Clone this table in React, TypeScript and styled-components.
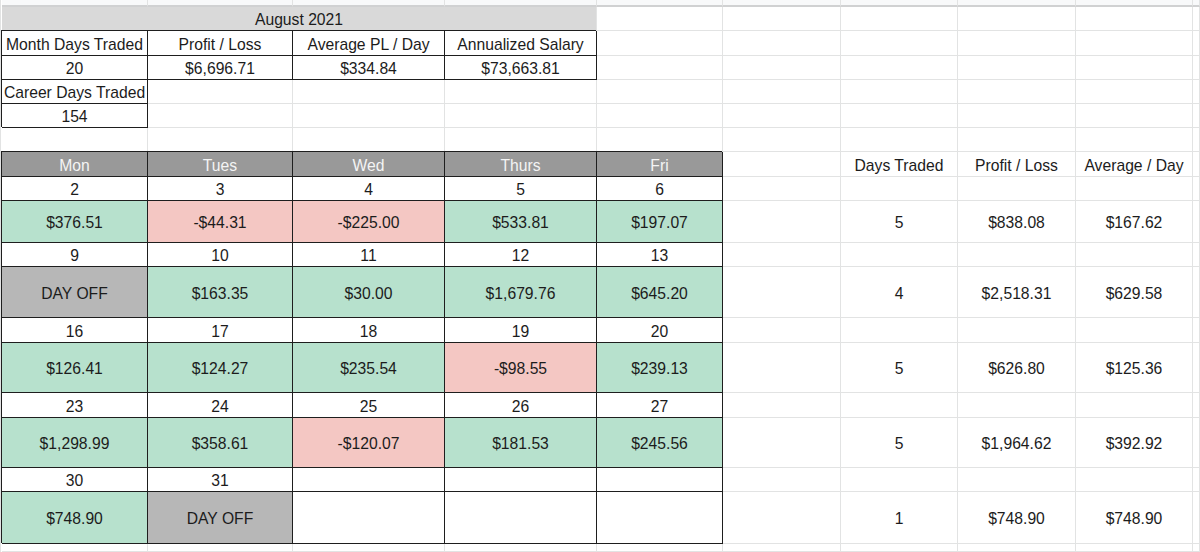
import * as React from "react";
import styled, { createGlobalStyle } from "styled-components";

const GlobalStyle = createGlobalStyle`
  html, body {
    margin: 0;
    padding: 0;
    background: #ffffff;
  }
  body {
    font-family: "Liberation Sans", Arial, sans-serif;
    overflow: hidden;
  }
`;

// column and row sizes read off the sheet
const COLS = [146, 145, 152, 152, 126, 118, 117, 118, 117, 7];
const ROWS = [7, 24, 25, 24, 24, 24, 24, 25, 24, 42, 24, 51, 25, 50, 25, 50, 24, 52, 8];

type Fill = "none" | "green" | "red" | "off" | "head" | "title" | "strip";

const FILLS: Record<Fill, string> = {
    none: "#ffffff",
    green: "#b7e1cd",
    red: "#f4c7c3",
    off: "#b7b7b7",
    head: "#999999",
    title: "#d9d9d9",
    strip: "#f8f9fa",
};

const Sheet = styled.div`
    box-sizing: border-box;
    display: grid;
    grid-template-columns: ${COLS.map(c => c + "px").join(" ")};
    grid-template-rows: ${ROWS.map(r => r + "px").join(" ")};
    width: 1200px;
    height: 552px;
    padding-left: 1px;
    border-left: 1px solid #e2e3e3;
    overflow: hidden;
    background: #ffffff;
`;

const Cell = styled.div<{ $fill: Fill; $boxed?: boolean; $span?: number }>`
    box-sizing: border-box;
    grid-column: span ${p => p.$span || 1};
    display: flex;
    align-items: center;
    justify-content: center;
    padding-top: ${p => (p.$fill === "strip" ? 0 : 3)}px;
    background: ${p => FILLS[p.$fill]};
    color: ${p => (p.$fill === "head" ? "#f4f4f4" : "#1c1c1c")};
    font-size: 15.7px;
    white-space: nowrap;
    border-right: 1px solid ${p => (p.$boxed ? "#1e1e1e" : "#e2e3e3")};
    border-bottom: ${p =>
        p.$boxed
            ? "1px solid #1e1e1e"
            : p.$fill === "strip"
            ? "2px solid #d0d1d2"
            : "1px solid #e2e3e3"};
    box-shadow: ${p => (p.$boxed ? "-1px -1px 0 #1e1e1e" : "none")};
`;

interface Spec {
    t?: string;
    f?: Fill;
    b?: boolean;
    s?: number;
}

const blanks = (n: number, f: Fill = "none"): Spec[] =>
    Array.from({ length: n }, () => ({ f }));

const dayRow = (nums: string[]): Spec[] => [
    ...nums.map(t => ({ t, b: true })),
    ...blanks(5),
];

const moneyRow = (vals: [string, Fill][], summary: string[]): Spec[] => [
    ...vals.map(([t, f]) => ({ t, f, b: true })),
    {},
    ...summary.map(t => ({ t })),
    {},
];

const rows: Spec[][] = [
    blanks(10, "strip"),
    [{ t: "August 2021", f: "title", s: 4 }, ...blanks(6)],
    [
        { t: "Month Days Traded", b: true },
        { t: "Profit / Loss", b: true },
        { t: "Average PL / Day", b: true },
        { t: "Annualized Salary", b: true },
        ...blanks(6),
    ],
    [
        { t: "20", b: true },
        { t: "$6,696.71", b: true },
        { t: "$334.84", b: true },
        { t: "$73,663.81", b: true },
        ...blanks(6),
    ],
    [{ t: "Career Days Traded", b: true }, ...blanks(9)],
    [{ t: "154", b: true }, ...blanks(9)],
    blanks(10),
    [
        ...["Mon", "Tues", "Wed", "Thurs", "Fri"].map(t => ({ t, f: "head" as Fill, b: true })),
        {},
        { t: "Days Traded" },
        { t: "Profit / Loss" },
        { t: "Average / Day" },
        {},
    ],
    dayRow(["2", "3", "4", "5", "6"]),
    moneyRow(
        [
            ["$376.51", "green"],
            ["-$44.31", "red"],
            ["-$225.00", "red"],
            ["$533.81", "green"],
            ["$197.07", "green"],
        ],
        ["5", "$838.08", "$167.62"]
    ),
    dayRow(["9", "10", "11", "12", "13"]),
    moneyRow(
        [
            ["DAY OFF", "off"],
            ["$163.35", "green"],
            ["$30.00", "green"],
            ["$1,679.76", "green"],
            ["$645.20", "green"],
        ],
        ["4", "$2,518.31", "$629.58"]
    ),
    dayRow(["16", "17", "18", "19", "20"]),
    moneyRow(
        [
            ["$126.41", "green"],
            ["$124.27", "green"],
            ["$235.54", "green"],
            ["-$98.55", "red"],
            ["$239.13", "green"],
        ],
        ["5", "$626.80", "$125.36"]
    ),
    dayRow(["23", "24", "25", "26", "27"]),
    moneyRow(
        [
            ["$1,298.99", "green"],
            ["$358.61", "green"],
            ["-$120.07", "red"],
            ["$181.53", "green"],
            ["$245.56", "green"],
        ],
        ["5", "$1,964.62", "$392.92"]
    ),
    dayRow(["30", "31", "", "", ""]),
    moneyRow(
        [
            ["$748.90", "green"],
            ["DAY OFF", "off"],
            ["", "none"],
            ["", "none"],
            ["", "none"],
        ],
        ["1", "$748.90", "$748.90"]
    ),
    blanks(10),
];

export default function App() {
    return (
        <>
            <GlobalStyle />
            <Sheet>
                {rows.map((row, r) =>
                    row.map((c, i) => (
                        <Cell key={r + "-" + i} $fill={c.f || "none"} $boxed={c.b} $span={c.s}>
                            {c.t}
                        </Cell>
                    ))
                )}
            </Sheet>
        </>
    );
}
